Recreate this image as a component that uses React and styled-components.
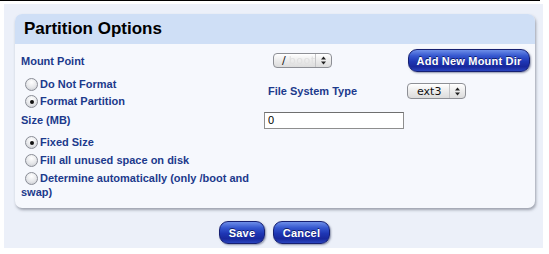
import React from 'react';
import styled, { createGlobalStyle } from 'styled-components';

const GlobalStyle = createGlobalStyle`
  html, body {
    margin: 0;
    padding: 0;
    background: #ffffff;
  }
  body {
    font-family: "Liberation Sans", Arial, sans-serif;
  }
`;

const TopRule = styled.div`
  width: 540px;
  height: 1px;
  background: #000000;
`;

const Page = styled.div`
  margin: 3px 0 0 4px;
  width: 539px;
  height: 244px;
  box-sizing: border-box;
  padding: 10px 0 0 11px;
  background: #ecf0f9;
`;

const Panel = styled.div`
  width: 520px;
  height: 194px;
  box-sizing: border-box;
  background: #f6f8fd;
  border-radius: 7px;
  box-shadow: 1px 2px 3px rgba(90, 95, 110, 0.55);
  overflow: hidden;
`;

const Header = styled.div`
  height: 30px;
  background: #cfdff6;
  padding-left: 9px;
  display: flex;
  align-items: center;
  font-size: 17px;
  font-weight: bold;
  color: #000000;
`;

const Body = styled.div`
  padding: 5px 0 0 6px;
  display: grid;
  grid-template-columns: 243px 140px 1fr;
`;

const Label = styled.div`
  font-size: 11px;
  font-weight: bold;
  color: #1c3a8c;
  display: flex;
  align-items: center;
  height: ${p => p.h || 20}px;
  padding-left: ${p => p.indent || 0}px;
`;

const Cell = styled.div`
  display: flex;
  align-items: center;
  height: ${p => p.h}px;
  padding-left: ${p => p.indent || 0}px;
`;

const RadioGroup = styled.div`
  display: flex;
  flex-direction: column;
  gap: ${p => p.gap}px;
  padding-top: ${p => p.top || 0}px;
`;

const Option = styled.div`
  font-size: 11px;
  font-weight: bold;
  color: #1c3a8c;
  line-height: 14px;
  width: 243px;
`;

const Radio = styled.span`
  display: inline-block;
  box-sizing: border-box;
  width: 13px;
  height: 13px;
  margin: 0 2px 0 4px;
  vertical-align: -3px;
  border-radius: 50%;
  border: 1px solid #8a8d96;
  background: radial-gradient(circle at 50% 30%, #ffffff 0%, #e6e7ea 55%, #c3c5cb 100%);
  position: relative;

  &::after {
    content: '';
    display: ${p => (p.checked ? 'block' : 'none')};
    position: absolute;
    left: 3.5px;
    top: 3.5px;
    width: 4px;
    height: 4px;
    border-radius: 50%;
    background: #111111;
  }
`;

const SelectBox = styled.div`
  box-sizing: border-box;
  width: 59px;
  height: ${p => p.h}px;
  border: 1px solid #8d8f95;
  border-radius: 4px;
  background: linear-gradient(#ffffff, #ececec 50%, #dcdcdc);
  display: flex;
  align-items: center;
  font-size: 11px;
  color: #111111;
  box-shadow: inset 0 1px 0 #ffffff;
`;

const SelectValue = styled.span`
  flex: 1;
  padding-left: ${p => p.pad}px;
  font-family: "DejaVu Sans", Verdana, sans-serif;
  font-size: 11px;
  font-weight: normal;
`;

const Ghost = styled.span`
  color: #e0e0e0;
  margin-left: 3px;
  letter-spacing: 0.5px;
  filter: blur(0.6px);
`;

const Arrows = styled.span`
  width: 15px;
  height: 100%;
  border-left: 1px solid #c4c4c6;
  display: flex;
  align-items: center;
  justify-content: center;
`;

const BlueButton = styled.button`
  box-sizing: border-box;
  width: ${p => p.w}px;
  height: 23px;
  padding: 0;
  border: 1px solid #162072;
  border-radius: 9px;
  background: linear-gradient(#6d8ee8 0%, #3557cf 28%, #1e36b4 55%, #18289c 80%, #2a45c0 100%);
  box-shadow: 1px 1px 2px rgba(40, 50, 90, 0.5);
  color: #ffffff;
  font-family: "Liberation Sans", Arial, sans-serif;
  font-size: 11px;
  font-weight: bold;
  letter-spacing: 0.2px;
  text-shadow: 0 -1px 0 rgba(0, 0, 40, 0.6);
  cursor: pointer;
`;

const TextInput = styled.input`
  box-sizing: border-box;
  width: 140px;
  height: 17px;
  border: 1px solid #8e8e8e;
  border-top-color: #6f6f6f;
  background: #ffffff;
  padding: 0 3px;
  font-family: "Liberation Sans", Arial, sans-serif;
  font-size: 11px;
  color: #000000;
`;

const Actions = styled.div`
  display: flex;
  justify-content: center;
  gap: 8px;
  margin: 13px 0 0 -15px;
  width: 549px;
`;

const UpDown = () => (
  <svg width="7" height="9" viewBox="0 0 7 9">
    <path d="M3.5 0.5 L6 3.5 L1 3.5 Z" fill="#222" />
    <path d="M3.5 8.5 L6 5.5 L1 5.5 Z" fill="#222" />
  </svg>
);

const options = [
  { label: 'Fixed Size', checked: true },
  { label: 'Fill all unused space on disk', checked: false },
  { label: 'Determine automatically (only /boot and swap)', checked: false }
];

const App = () => {
  return (
    <>
      <GlobalStyle />
      <TopRule />
      <Page>
        <Panel>
          <Header>Partition Options</Header>
          <Body>
            <Label h={23}>Mount Point</Label>
            <Cell h={23} indent={9}>
              <SelectBox h={15}>
                <SelectValue pad={8}>/<Ghost>boot</Ghost></SelectValue>
                <Arrows><UpDown /></Arrows>
              </SelectBox>
            </Cell>
            <Cell h={23} indent={4}>
              <BlueButton w={122}>Add New Mount Dir</BlueButton>
            </Cell>

            <RadioGroup gap={3} top={5}>
              <Option><Radio />Do Not Format</Option>
              <Option><Radio checked />Format Partition</Option>
            </RadioGroup>
            <Label h={38} indent={4}>File System Type</Label>
            <Cell h={38} indent={3}>
              <SelectBox h={16}>
                <SelectValue pad={9}>ext3</SelectValue>
                <Arrows><UpDown /></Arrows>
              </SelectBox>
            </Cell>

            <Label h={20}>Size (MB)</Label>
            <Cell h={20}>
              <TextInput defaultValue="0" />
            </Cell>
            <div />

            <RadioGroup gap={4} top={5}>
              {options.map(o => (
                <Option key={o.label}><Radio checked={o.checked} />{o.label}</Option>
              ))}
            </RadioGroup>
          </Body>
        </Panel>
        <Actions>
          <BlueButton w={46}>Save</BlueButton>
          <BlueButton w={57}>Cancel</BlueButton>
        </Actions>
      </Page>
    </>
  );
};

export default App;
